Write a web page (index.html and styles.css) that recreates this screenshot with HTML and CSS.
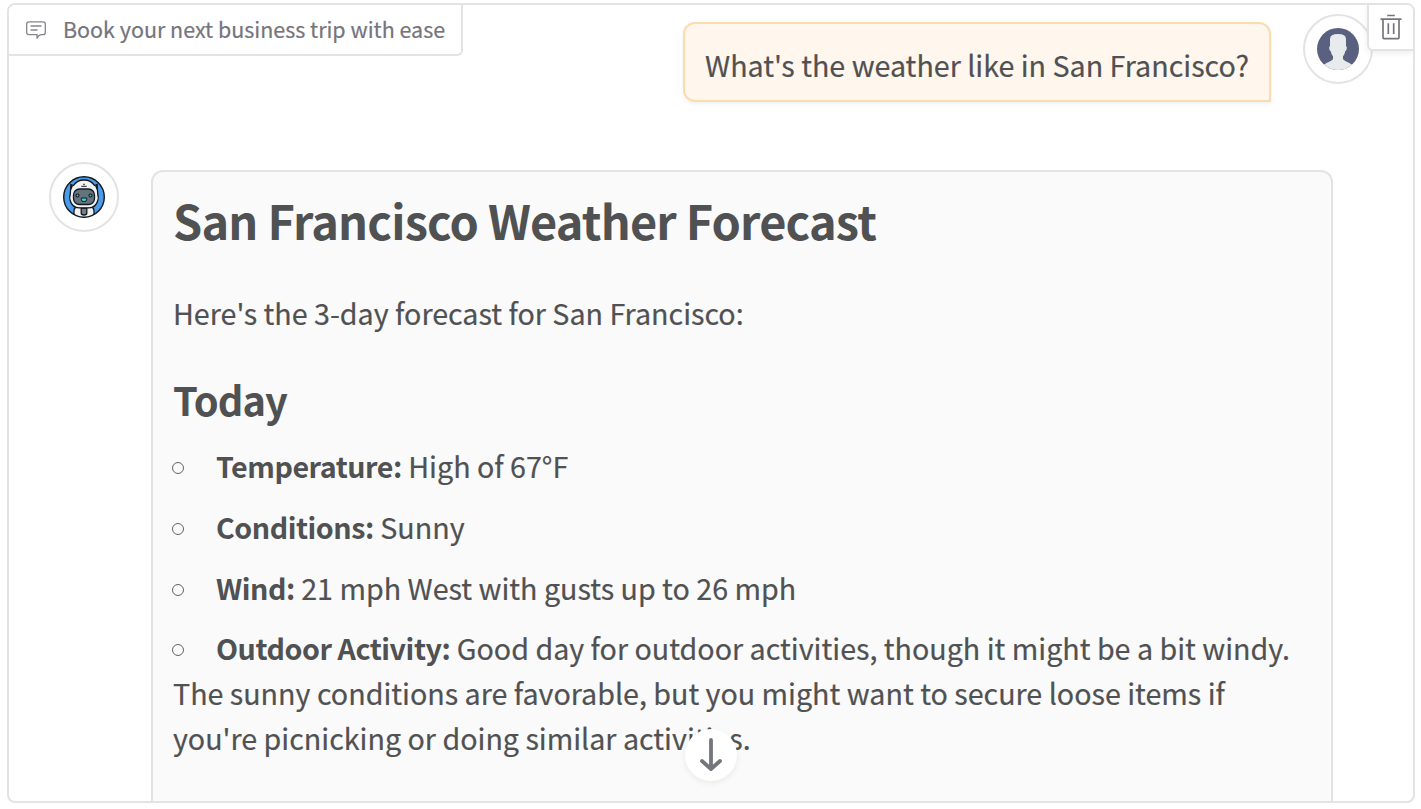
FILE: index.html
```html
<!DOCTYPE html>
<html lang="en">
<head>
<meta charset="utf-8">
<title>Chat</title>
<link rel="stylesheet" href="styles.css">
</head>
<body>
<main class="chat">
  <div class="messages">
    <div class="row row-user">
      <div class="bubble">What's the weather like in San Francisco?</div>
      <div class="avatar">
        <svg width="42" height="42" viewBox="0 0 42 42">
          <defs><clipPath id="user-clip"><circle cx="21" cy="21" r="21"/></clipPath></defs>
          <g clip-path="url(#user-clip)">
            <rect width="42" height="42" fill="#5a607f"/>
            <path d="M13 11Q13 6 21 6t8 5v7.500c1 0 1 1.500.5 3-.3 1-.8 1.500-1.200 1.500-.3 2-1.300 4-2.300 5.200V31c1 2 5 3 9 5.500V43H7v-6.500c4-2.500 8-3.500 9-5.500v-2.800c-1-1.200-2-3.200-2.300-5.200-.4 0-.9-.5-1.200-1.500-.5-1.500-.5-3 .5-3z" fill="#e7ebec"/>
          </g>
        </svg>
      </div>
    </div>
    <div class="row row-bot">
      <div class="avatar">
        <svg width="42" height="42" viewBox="0 0 42 42">
          <defs><clipPath id="bot-clip"><circle cx="21" cy="21" r="20.500"/></clipPath></defs>
          <circle cx="21" cy="21" r="20.300" fill="#4a9be8"/>
          <g clip-path="url(#bot-clip)" stroke="#111820" stroke-width="1.300">
            <path d="M11 44V35q0-4 4-4h12q4 0 4 4v9z" fill="#f2f2f2"/>
            <path d="M18.200 32h5.600v5q0 2-2.800 2t-2.800-2z" fill="#777f83"/>
            <path d="M8 8.500 10.500 9.500Q14 4 21 4t10.500 5.500l2.500-1 .8 10q1 3 0 6-2 7.300-9 7.300h-9.600q-7 0-9-7.300-1-3 0-6z" fill="#f3f3f3"/>
            <path d="M7.500 8.200 10 10 7.800 14.500zM34.500 8.200 32 10l2.200 4.500z" fill="#111820" stroke="none"/>
            <rect x="10.500" y="13" width="21" height="15.500" rx="6" fill="#65737d"/>
            <circle cx="14.500" cy="19.500" r="1.500" fill="#35c8cf" stroke-width="1.100"/>
            <circle cx="27.500" cy="19.500" r="1.500" fill="#35c8cf" stroke-width="1.100"/>
            <path d="M18.300 22h5.400v1.500q0 2.200-2.700 2.200t-2.700-2.200z" fill="#35d1d3" stroke-width="1"/>
            <path d="M18.300 10.300h5.400M20.200 8.300h1.600" fill="none" stroke-width="1"/>
          </g>
          <circle cx="21" cy="21" r="20.300" fill="none" stroke="#111820" stroke-width="1.400"/>
        </svg>
      </div>
      <article class="card">
        <h1 class="title">San Francisco Weather Forecast</h1>
        <p class="intro">Here's the 3-day forecast for San Francisco:</p>
        <h2 class="day">Today</h2>
        <ul class="facts">
          <li><span class="dot"></span><b class="label">Temperature:</b> High of 67°F</li>
          <li><span class="dot"></span><b class="label">Conditions:</b> Sunny</li>
          <li><span class="dot"></span><b class="label">Wind:</b> 21 mph West with gusts up to 26 mph</li>
          <li><span class="dot"></span><b class="label">Outdoor Activity:</b> Good day for outdoor activities, though it might be a bit windy.<br>The sunny conditions are favorable, but you might want to secure loose items if<br>you're picnicking or doing similar activities.</li>
        </ul>
      </article>
    </div>
  </div>
  <div class="topic">
    <svg class="topic-icon" width="20" height="18" viewBox="0 0 20 18" fill="none" stroke="#85858c" stroke-width="1.300">
      <path d="M3 .8h14Q19.300.8 19.300 3v8.500q0 2.200-2.300 2.200h-2q-2.500.3-4 3.800v-3.800H3Q.7 13.700.7 11.500V3Q.7.8 3 .8zM4.500 5h11M4.500 9h7"/>
    </svg>
    <span class="topic-text">Book your next business trip with ease</span>
  </div>
  <button class="clear" aria-label="Clear chat">
    <svg width="22" height="26" viewBox="0 0 22 26" fill="none" stroke="#75757d" stroke-width="1.700">
      <path d="M.5 5.200h21M7.200 1.500h7.600M3 5.200v18.600q0 .9.9.9h14.200q.9 0 .9-.9V5.200M8.300 9.300V20M13.700 9.300V20"/>
    </svg>
  </button>
  <button class="scroll-down" aria-label="Scroll down">
    <svg width="24" height="36" viewBox="0 0 24 36" fill="none" stroke="#75757d" stroke-width="3.800" stroke-linecap="round" stroke-linejoin="round">
      <path d="M12 3v29M3 24l9 8 9-8"/>
    </svg>
  </button>
</main>
</body>
</html>
```
FILE: styles.css
```css
* { box-sizing: border-box; }
body {
  margin: 0;
  padding: 3px 6px 6px 7px;
  height: 809px;
  overflow: hidden;
  background: #fff;
  color: #505152;
  font-family: "Noto Sans CJK SC", "Noto Sans", sans-serif;
  font-size: 28.650px;
  line-height: 45px;
  -webkit-text-stroke: .2px;
}
.chat {
  position: relative;
  height: 800px;
  border: 2px solid #e3e3e4;
  border-radius: 8px;
  overflow: hidden;
}
.messages { padding: 9px 40px 0; }
.row { display: flex; align-items: flex-start; gap: 32px; }
.row-user { justify-content: flex-end; }
.row-bot { margin-top: 60px; }
.avatar {
  flex: none;
  display: flex;
  align-items: center;
  justify-content: center;
  width: 70px;
  height: 70px;
  border: 2px solid #e3e3e4;
  border-radius: 50%;
  background: #fff;
}
.bubble {
  width: 588px;
  height: 80px;
  margin-top: 8px;
  padding: 19px 20px;
  line-height: 44px;
  border: 2px solid #fadcaf;
  border-radius: 12px 12px 0 12px;
  background: #fff7ed;
  box-shadow: 0 2px 4px rgba(0, 0, 0, .06);
  white-space: nowrap;
}
.card {
  width: 1182px;
  height: 680px;
  margin-top: 8px;
  padding: 19px 20px;
  border: 2px solid #e3e3e4;
  border-radius: 12px;
  background: #fafafa;
  white-space: nowrap;
}
.title,
.day { font-weight: 700; -webkit-text-stroke: 0; }
.title { margin: 0; font-size: 46.900px; line-height: 58px; letter-spacing: -.81px; }
.intro { margin: 41px 0 0; }
.day { margin: 37px 0 0; font-size: 39.800px; line-height: 54px; letter-spacing: -.9px; }
.label { letter-spacing: -.45px; -webkit-text-stroke: 0; }
.facts {
  display: flex;
  flex-direction: column;
  gap: 15.800px;
  margin: 17px 0 0;
  padding: 0;
  list-style: none;
}
.dot {
  display: inline-block;
  width: 12px;
  height: 12px;
  margin: 0 32px 0 -1px;
  border: 1px solid #626364;
  border-radius: 50%;
  vertical-align: 4px;
}
.topic {
  position: absolute;
  top: 0;
  left: 0;
  display: flex;
  align-items: center;
  gap: 17px;
  width: 454px;
  height: 51px;
  padding-left: 17px;
  border-right: 2px solid #e3e3e4;
  border-bottom: 2px solid #e3e3e4;
  border-radius: 0 0 6px 0;
  background: #fff;
  color: #74747c;
  font-size: 21.470px;
  white-space: nowrap;
}
.topic-text { padding-bottom: 2px; }
.clear {
  position: absolute;
  top: 0;
  right: 0;
  display: flex;
  align-items: center;
  justify-content: center;
  width: 46px;
  height: 46px;
  padding: 0;
  border: solid #e3e3e4;
  border-width: 0 0 2px 2px;
  border-radius: 0 0 0 6px;
  background: #fff;
  box-shadow: 0 2px 6px rgba(0, 0, 0, .08);
}
.scroll-down {
  position: absolute;
  left: 676px;
  top: 724px;
  display: flex;
  align-items: center;
  justify-content: center;
  width: 52px;
  height: 52px;
  padding: 0;
  border: 0;
  border-radius: 50%;
  background: #fff;
  box-shadow: 0 2px 6px rgba(0, 0, 0, .07);
}
```
